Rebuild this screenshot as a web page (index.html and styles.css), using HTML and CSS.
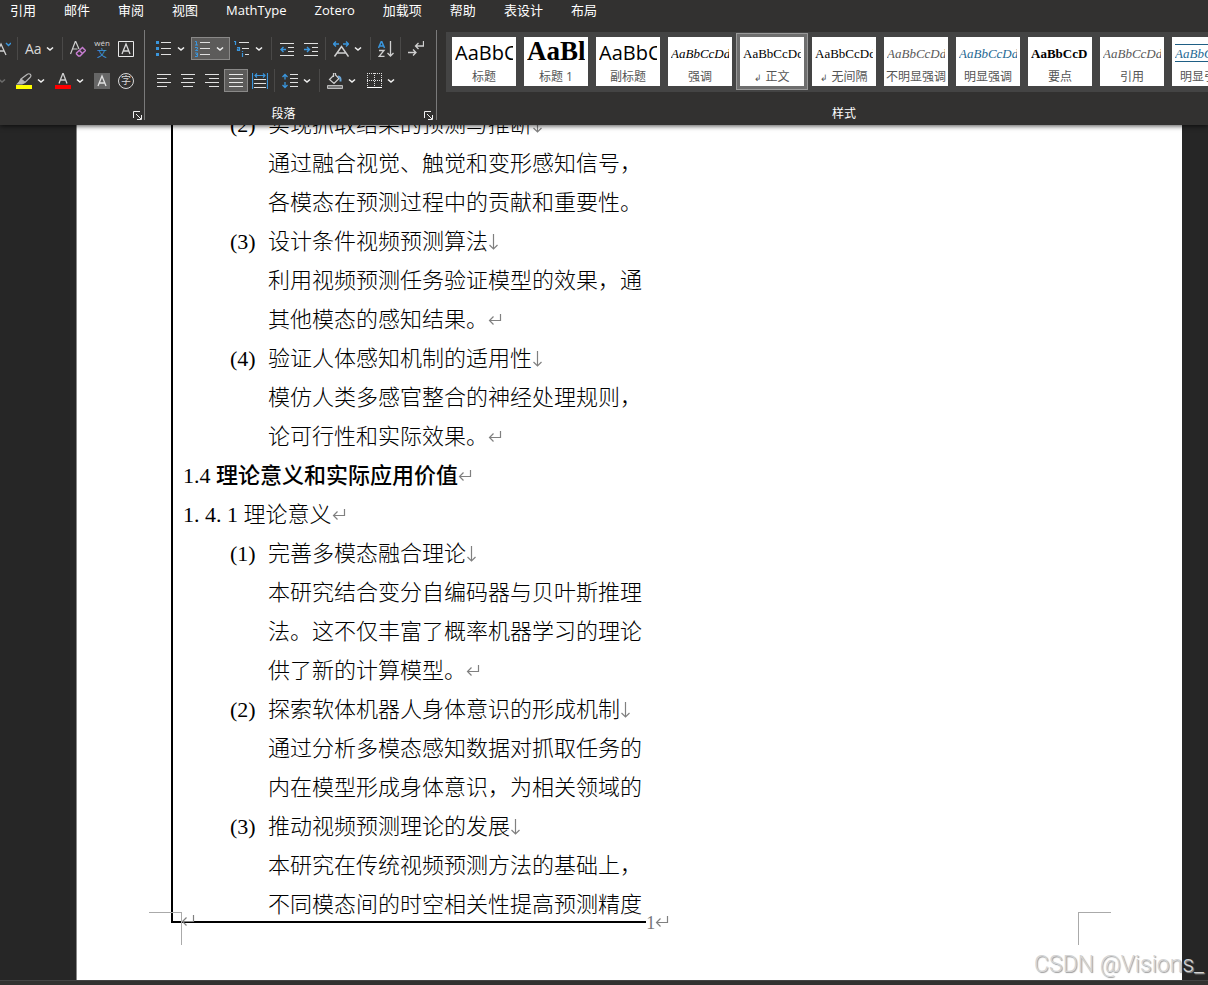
FILE: index.html
```html
<!DOCTYPE html>
<html lang="zh-CN">
<head>
  <meta charset="UTF-8">
  <meta name="viewport" content="width=device-width, initial-scale=1.0">
  <title>文档</title>
  <link rel="stylesheet" href="styles.css">
</head>
<body>
  <svg class="sprite" aria-hidden="true">
    <symbol id="chevron" viewBox="0 0 8 8"><path d="M1 2.500L4 5L7 2.500" fill="none" stroke="#f0f0f0" stroke-width="1.6"/></symbol>
    <symbol id="enter" viewBox="0 0 14 14"><path d="M12.500 1v6.500H1.500M5.500 3.500L1.500 7.500L5.500 11.500" fill="none" stroke="#808080" stroke-width="1.200"/></symbol>
    <symbol id="down" viewBox="0 0 10 18"><path d="M5.500 0v15M1.500 11L5.500 15L9.500 11" fill="none" stroke="#808080" stroke-width="1.200"/></symbol>
    <symbol id="launcher" viewBox="0 0 9 9"><path d="M.5 7V.5H7M3 3L8 8M8.500 4v4.500H4" fill="none" stroke="#f0f0f0"/></symbol>
  </svg>

  <div class="window">
    <header class="ribbon">
      <nav class="tabs">
        <a href="#">引用</a>
        <a href="#">邮件</a>
        <a href="#">审阅</a>
        <a href="#">视图</a>
        <a href="#">MathType</a>
        <a href="#">Zotero</a>
        <a href="#">加载项</a>
        <a href="#">帮助</a>
        <a href="#">表设计</a>
        <a href="#">布局</a>
      </nav>

      <div class="groups">
        <section class="group font-group">
          <div class="tools">
            <button class="tool" aria-label="减小字号"><svg class="icon" viewBox="0 0 16 16"><path d="M1 14L6 3L11 14M3 10h6" fill="none" stroke="#d0d0d0" stroke-width="1.3"/><path d="M11 2l2.500 2.500L16 2" fill="none" stroke="#3a96dd" stroke-width="1.4"/></svg></button>
            <span class="sep"></span>
            <button class="tool split" aria-label="更改大小写"><span class="case">Aa</span><svg class="chev"><use href="#chevron"/></svg></button>
            <span class="sep"></span>
            <button class="tool" aria-label="清除格式"><svg class="icon" viewBox="0 0 16 16"><path d="M.5 13L5.500 0L9 8M2.500 8h5" fill="none" stroke="#d0d0d0" stroke-width="1.200"/><path d="M6.500 12L12.500 6.500L15.500 9.500L10 15H8.500L6.500 13ZM9.500 9.500l3 3" fill="none" stroke="#c77dd1" stroke-width="1.500"/></svg></button>
            <button class="tool pinyin" aria-label="拼音指南"><span>wén</span><b>文</b></button>
            <button class="tool" aria-label="字符边框"><svg class="icon" viewBox="0 0 16 16"><path d="M.5.5h15v15H.5z" fill="none" stroke="#e8e8e8"/><path d="M4 13L8 3L12 13M5.500 10h5" fill="none" stroke="#d8d8d8" stroke-width="1.300"/></svg></button>
          </div>
          <div class="tools">
            <button class="tool split" aria-label="文本效果"><svg class="chev dim"><use href="#chevron"/></svg></button>
            <button class="tool split" aria-label="突出显示"><svg class="icon" viewBox="0 0 16 16"><path d="M5 6L11 1.500Q13 0 14.500 1.500Q15.500 3 14 4.500L9 9.500L5 6ZM5 6L3 9.500L1.500 11H6L9 9.500" fill="none" stroke="#b8b8b8" stroke-width="1.200"/><path d="M5 6l4 3.500L6 11H1.500z" fill="#b8b8b8"/><path d="M0 12h16v4H0z" fill="#ff0"/></svg><svg class="chev"><use href="#chevron"/></svg></button>
            <button class="tool split" aria-label="字体颜色"><svg class="icon" viewBox="0 0 16 16"><path d="M4 10.500L8 0L12 10.500M5.500 7h5" fill="none" stroke="#d0d0d0" stroke-width="1.300"/><path d="M0 12h16v4H0z" fill="#f00"/></svg><svg class="chev"><use href="#chevron"/></svg></button>
            <button class="tool" aria-label="字符底纹"><svg class="icon" viewBox="0 0 16 16"><path d="M0 0h16v16H0z" fill="#666"/><path d="M4 13L8 3L12 13M5.500 10h5" fill="none" stroke="#e0e0e0" stroke-width="1.300"/></svg></button>
            <button class="tool" aria-label="带圈字符"><span class="circled">字</span></button>
          </div>
          <footer class="group-label"><span></span><svg class="launch"><use href="#launcher"/></svg></footer>
        </section>

        <section class="group para-group">
          <div class="tools">
            <button class="tool split" aria-label="项目符号"><svg class="icon" viewBox="0 0 16 16"><path d="M0 0h3v3H0zM0 6h3v3H0zM0 12h3v3H0z" fill="#3a96dd"/><path d="M5 1.500h10M5 7.500h10M5 13.500h10" stroke="#e0e0e0"/></svg><svg class="chev"><use href="#chevron"/></svg></button>
            <button class="tool split active" aria-label="编号"><svg class="icon" viewBox="0 0 16 16"><path d="M0 .5h1.500V4M0 4h3M0 6.500h2.500v1.500L.5 9.500H3M0 12h2.500v3.500H0M1 13.500h1.500" fill="none" stroke="#3a96dd"/><path d="M5 1.500h10M5 7.500h10M5 13.500h10" stroke="#e0e0e0"/></svg><svg class="chev"><use href="#chevron"/></svg></button>
            <button class="tool split" aria-label="多级列表"><svg class="icon" viewBox="0 0 16 16"><path d="M0 .5h1.500V4M3 6.500h2.500v3H3.500V8h2M8.500 12v4M8.500 10v1" fill="none" stroke="#3a96dd" stroke-width="1.200"/><path d="M5 1.500h10M8 7.500h7M11 13.500h4" stroke="#e0e0e0"/></svg><svg class="chev"><use href="#chevron"/></svg></button>
            <span class="sep"></span>
            <button class="tool" aria-label="减少缩进量"><svg class="icon" viewBox="0 0 16 16"><path d="M1 2.500h14M9 6.500h6M9 10.500h6M1 14.500h14" stroke="#e0e0e0"/><path d="M7 8.500H2M4.500 6L2 8.500L4.500 11" fill="none" stroke="#3a96dd" stroke-width="1.400"/></svg></button>
            <button class="tool" aria-label="增加缩进量"><svg class="icon" viewBox="0 0 16 16"><path d="M1 2.500h14M9 6.500h6M9 10.500h6M1 14.500h14" stroke="#e0e0e0"/><path d="M1 8.500h5.500M4 6L6.500 8.500L4 11" fill="none" stroke="#3a96dd" stroke-width="1.400"/></svg></button>
            <span class="sep"></span>
            <button class="tool split" aria-label="中文版式"><svg class="icon" viewBox="0 0 16 16"><path d="M1.500 15.500L8.500 5.500L15.500 15.500M4 12h9" fill="none" stroke="#d0d0d0" stroke-width="1.500"/><path d="M6 3H1M3 .5L.5 3L3 5.500M10 3h5M13 .5L15.500 3L13 5.500" fill="none" stroke="#3a96dd" stroke-width="1.400"/></svg><svg class="chev"><use href="#chevron"/></svg></button>
            <span class="sep"></span>
            <button class="tool" aria-label="排序"><svg class="icon" viewBox="0 0 16 16"><path d="M.5 7L3.500 0L6.500 7M1.500 5h4" fill="none" stroke="#3a96dd" stroke-width="1.500"/><path d="M1 9.500h5L1 15.500h5.500M12.500 0v15M9.500 12L12.500 15L15.500 12" fill="none" stroke="#d0d0d0" stroke-width="1.300"/></svg></button>
            <span class="sep"></span>
            <button class="tool" aria-label="显示编辑标记"><svg class="icon" viewBox="0 0 16 16"><path d="M15.500 0v5H8M10.500 2L7.500 5L10.500 8M0 11.500h8M5 8.500L8 11.500L5 14.500" fill="none" stroke="#d0d0d0" stroke-width="1.300"/></svg></button>
          </div>
          <div class="tools">
            <button class="tool" aria-label="左对齐"><svg class="icon" viewBox="0 0 16 16"><path d="M1 1.500h14M1 5.500h10M1 9.500h14M1 13.500h10" stroke="#e0e0e0"/></svg></button>
            <button class="tool" aria-label="居中"><svg class="icon" viewBox="0 0 16 16"><path d="M1 1.500h14M3 5.500h10M1 9.500h14M3 13.500h10" stroke="#e0e0e0"/></svg></button>
            <button class="tool" aria-label="右对齐"><svg class="icon" viewBox="0 0 16 16"><path d="M1 1.500h14M5 5.500h10M1 9.500h14M5 13.500h10" stroke="#e0e0e0"/></svg></button>
            <button class="tool active" aria-label="两端对齐"><svg class="icon" viewBox="0 0 16 16"><path d="M1 1.500h14M1 5.500h14M1 9.500h14M1 13.500h14" stroke="#e8e8e8"/></svg></button>
            <button class="tool" aria-label="分散对齐"><svg class="icon" viewBox="0 0 16 16"><path d="M.5 0v16M15.500 0v16M3 2.500h10M5 .5L3 2.500L5 4.500M11 .5L13 2.500L11 4.500" fill="none" stroke="#3a96dd" stroke-width="1.200"/><path d="M2 6.500h12M2 10.500h12M2 14.500h12" stroke="#e0e0e0"/></svg></button>
            <span class="sep"></span>
            <button class="tool split" aria-label="行距"><svg class="icon" viewBox="0 0 16 16"><path d="M3 1.500v5M.5 4L3 1.500L5.500 4M3 9v5.500M.5 12L3 14.500L5.500 12" fill="none" stroke="#3a96dd" stroke-width="1.300"/><path d="M8 1.500h8M8 5.500h8M8 9.500h8M8 13.500h8" stroke="#e0e0e0"/></svg><svg class="chev"><use href="#chevron"/></svg></button>
            <span class="sep"></span>
            <button class="tool split" aria-label="底纹"><svg class="icon" viewBox="0 0 16 16"><path d="M7 2L2.500 6.500L7 10.500L12 5.500L8.500 2V0H6.500V4" fill="none" stroke="#d0d0d0" stroke-width="1.200"/><path d="M11 3.500q3 0 2.500 5" fill="none" stroke="#6ba6d6" stroke-width="2"/><path d="M.5 12.500h15v3H.5z" fill="#777" stroke="#bbb"/></svg><svg class="chev"><use href="#chevron"/></svg></button>
            <button class="tool split" aria-label="边框"><svg class="icon" viewBox="0 0 16 16"><path d="M1 .5h15M1 7.500h15M1.500 0v14M8.500 0v14M15.500 0v14" stroke="#e0e0e0" stroke-dasharray="1 1"/><path d="M1 14.500h15" stroke="#fff"/></svg><svg class="chev"><use href="#chevron"/></svg></button>
          </div>
          <footer class="group-label"><span>段落</span><svg class="launch"><use href="#launcher"/></svg></footer>
        </section>

        <section class="group style-group">
          <div class="gallery">
            <button class="style"><span class="sample big">AaBbC</span><span>标题</span></button>
            <button class="style"><span class="sample heading">AaBl</span><span>标题 1</span></button>
            <button class="style"><span class="sample big">AaBbC</span><span>副标题</span></button>
            <button class="style"><span class="sample italic">AaBbCcDd</span><span>强调</span></button>
            <button class="style selected"><span class="sample">AaBbCcDd</span><span><small>↲</small> 正文</span></button>
            <button class="style"><span class="sample">AaBbCcDd</span><span><small>↲</small> 无间隔</span></button>
            <button class="style"><span class="sample italic gray">AaBbCcDd</span><span>不明显强调</span></button>
            <button class="style"><span class="sample italic blue">AaBbCcDd</span><span>明显强调</span></button>
            <button class="style"><span class="sample strong">AaBbCcD</span><span>要点</span></button>
            <button class="style"><span class="sample italic gray">AaBbCcDd</span><span>引用</span></button>
            <button class="style"><span class="sample italic blue ruled">AaBbCcDd</span><span>明显引用</span></button>
          </div>
          <footer class="group-label"><span>样式</span></footer>
        </section>
      </div>
    </header>

    <main class="workspace">
      <article class="page">
        <div class="frame">
          <div class="text">
            <h4><span>(2)</span>实现抓取结果的预测与推断<svg class="down"><use href="#down"/></svg></h4>
            <p>通过融合视觉、触觉和变形感知信号，</p>
            <p>各模态在预测过程中的贡献和重要性。</p>
            <h4><span>(3)</span>设计条件视频预测算法<svg class="down"><use href="#down"/></svg></h4>
            <p>利用视频预测任务验证模型的效果，通</p>
            <p>其他模态的感知结果。<svg class="enter"><use href="#enter"/></svg></p>
            <h4><span>(4)</span>验证人体感知机制的适用性<svg class="down"><use href="#down"/></svg></h4>
            <p>模仿人类多感官整合的神经处理规则，</p>
            <p>论可行性和实际效果。<svg class="enter"><use href="#enter"/></svg></p>
            <h2>1.4 <b>理论意义和实际应用价值</b><svg class="enter"><use href="#enter"/></svg></h2>
            <h3>1. 4. 1 理论意义<svg class="enter"><use href="#enter"/></svg></h3>
            <h4><span>(1)</span>完善多模态融合理论<svg class="down"><use href="#down"/></svg></h4>
            <p>本研究结合变分自编码器与贝叶斯推理</p>
            <p>法。这不仅丰富了概率机器学习的理论</p>
            <p>供了新的计算模型。<svg class="enter"><use href="#enter"/></svg></p>
            <h4><span>(2)</span>探索软体机器人身体意识的形成机制<svg class="down"><use href="#down"/></svg></h4>
            <p>通过分析多模态感知数据对抓取任务的</p>
            <p>内在模型形成身体意识，为相关领域的</p>
            <h4><span>(3)</span>推动视频预测理论的发展<svg class="down"><use href="#down"/></svg></h4>
            <p>本研究在传统视频预测方法的基础上，</p>
            <p>不同模态间的时空相关性提高预测精度</p>
          </div>
        </div>
        <footer class="page-footer">
          <svg class="enter first"><use href="#enter"/></svg>
          <span class="number">1<svg class="enter"><use href="#enter"/></svg></span>
          <i class="crop left"></i>
          <i class="crop right"></i>
        </footer>
      </article>
      <div class="watermark">CSDN @Visions_</div>
    </main>
    <div class="statusbar"></div>
  </div>
</body>
</html>
```
FILE: styles.css
```css
* {
  box-sizing: border-box;
}

body {
  margin: 0;
  font-family: "Open Sans", "Noto Sans CJK SC", sans-serif;
  background: #262626;
}

.sprite {
  display: none;
}

.window {
  display: flex;
  flex-direction: column;
  height: 100vh;
  overflow: hidden;
}

/* ribbon */
.ribbon {
  position: relative;
  z-index: 1;
  background: #323130;
  color: #fff;
  box-shadow: 0 1px 5px rgba(0, 0, 0, 0.7);
}

.tabs {
  display: flex;
  gap: 28px;
  height: 30px;
  padding: 0 10px;
  font-size: 13px;
  line-height: 20px;
  white-space: nowrap;
}

.tabs a {
  color: #fff;
  text-decoration: none;
}

.groups {
  display: flex;
  padding-bottom: 5px;
}

.group {
  display: flex;
  flex-direction: column;
  flex: none;
  gap: 9px;
  height: 90px;
  padding-top: 7px;
}

.font-group {
  width: 145px;
  overflow: hidden;
  padding-right: 6px;
  border-right: 1px solid #7a7a7a;
}

.font-group .tools {
  justify-content: flex-end;
}

.para-group {
  width: 292px;
  padding-left: 7px;
  border-right: 1px solid #7a7a7a;
}

.tools {
  display: flex;
  height: 23px;
}

.tool {
  display: flex;
  flex: none;
  align-items: center;
  width: 24px;
  height: 23px;
  padding: 0 4px;
  border: 0;
  background: none;
  color: #d8d8d8;
  font-family: inherit;
}

.split {
  width: 39px;
}

.active {
  background: #5c5b5a;
  box-shadow: inset 0 0 0 1px #8a8988;
}

.icon {
  flex: none;
  width: 16px;
  height: 16px;
}

.chev {
  flex: none;
  width: 8px;
  height: 8px;
  margin-left: 5px;
}

.dim {
  margin-left: 21px;
  opacity: 0.3;
}

.sep {
  flex: none;
  width: 1px;
  margin: 0 3px 0 2px;
  background: #4a4948;
}

.case {
  width: 16px;
  font-size: 14px;
}

.pinyin {
  flex-direction: column;
  justify-content: center;
  padding: 0;
  font-size: 8px;
  line-height: 9px;
}

.pinyin b {
  color: #3a96dd;
  font-size: 10px;
  font-weight: 400;
  line-height: 12px;
}

.circled {
  width: 16px;
  height: 16px;
  border: 1px solid #d8d8d8;
  border-radius: 50%;
  font-size: 10px;
  line-height: 13px;
}

.group-label {
  display: flex;
  height: 16px;
  margin-top: auto;
  font-size: 12px;
  line-height: 20px;
}

.group-label span {
  flex: 1;
  text-align: center;
}

.launch {
  align-self: flex-end;
  width: 9px;
  height: 9px;
}

.para-group .group-label {
  margin-right: 3px;
}

.para-group .group-label span {
  padding-right: 9px;
}

.font-group .group-label {
  margin-right: -4px;
}

/* style gallery */
.style-group {
  flex: 1;
  min-width: 0;
  padding: 2px 0 0 9px;
}

.style-group .group-label {
  padding-left: 34px;
}

.gallery {
  display: flex;
  gap: 8px;
  height: 60px;
  padding: 5px 6px;
  overflow: hidden;
  background: #444;
}

.style {
  display: flex;
  flex: none;
  flex-direction: column;
  width: 64px;
  height: 49px;
  padding: 0;
  border: 0;
  background: #fff;
  color: #555;
  font-family: inherit;
  font-size: 12px;
  line-height: 16px;
  text-align: center;
  white-space: nowrap;
}

.style > span {
  width: 100%;
}

.style small {
  font-size: 9px;
}

.selected {
  outline: 3px solid #6e6e6e;
  box-shadow: 0 0 0 4px #999;
}

.style .sample {
  width: 58px;
  height: 32px;
  margin-left: 3px;
  overflow: hidden;
  color: #000;
  font-family: "Liberation Serif", serif;
  font-size: 13px;
  line-height: 33px;
  text-align: left;
}

.style .big {
  font-family: "Open Sans", sans-serif;
  font-size: 20px;
  line-height: 31px;
}

.style .heading {
  font-size: 27px;
  font-weight: 700;
  line-height: 29px;
}

.style .italic {
  font-style: italic;
}

.style .strong {
  font-weight: 700;
}

.style .gray {
  color: #595959;
}

.style .blue {
  color: #1f6a94;
}

.style .ruled {
  height: 18px;
  margin-top: 7px;
  margin-bottom: 7px;
  border-top: 1px solid #1f5f85;
  border-bottom: 1px solid #1f5f85;
  line-height: 17px;
}

/* document */
.workspace {
  position: relative;
  display: flex;
  flex: 1;
  min-height: 0;
  padding: 0 26px 0 76px;
}

.page {
  display: flex;
  flex: 1;
  flex-direction: column;
  min-width: 0;
  border-left: 1px solid #888;
  background: #fff;
}

.frame {
  display: flex;
  flex: 1;
  flex-direction: column;
  justify-content: flex-end;
  width: 43%;
  min-height: 0;
  margin-left: 94px;
  padding-left: 10px;
  overflow: hidden;
  border-left: 2px solid #000;
  border-bottom: 2px solid #000;
}

.text {
  margin-bottom: -3px;
  color: #000;
  font-family: "Liberation Serif", "Noto Sans CJK SC", serif;
  font-size: 22px;
  font-weight: 300;
  line-height: 39px;
  white-space: nowrap;
}

.text h2,
.text h3,
.text h4,
.text p {
  height: 39px;
  margin: 0;
  font-size: 22px;
  font-weight: 300;
}

.text h2 b {
  font-weight: 500;
}

.text h4 {
  padding-left: 47px;
}

.text h4 span {
  display: inline-block;
  width: 38px;
}

.text p {
  padding-left: 85px;
}

.enter {
  width: 14px;
  height: 14px;
}

.down {
  width: 10px;
  height: 18px;
  vertical-align: -3px;
}

.page-footer {
  position: relative;
  height: 57px;
}

.first {
  position: absolute;
  top: -9px;
  left: 104px;
}

.number {
  position: absolute;
  top: -12px;
  left: calc(43% + 94px);
  color: #777;
  font-family: "Liberation Serif", serif;
  font-size: 18px;
  line-height: 24px;
}

.crop {
  position: absolute;
  top: -11px;
  width: 33px;
  height: 33px;
  border-top: 1px solid #aaa;
}

.crop.left {
  left: 72px;
  border-right: 1px solid #aaa;
}

.crop.right {
  right: 71px;
  border-left: 1px solid #aaa;
}

.watermark {
  position: absolute;
  right: 4px;
  bottom: 0;
  color: #d4d4d4;
  font-family: Roboto, sans-serif;
  font-size: 23px;
  font-weight: 300;
  line-height: 30px;
  text-shadow: 1px 1px 1px #999;
}

.statusbar {
  height: 5px;
  border-top: 1px solid #444;
  background: #323130;
}
```
